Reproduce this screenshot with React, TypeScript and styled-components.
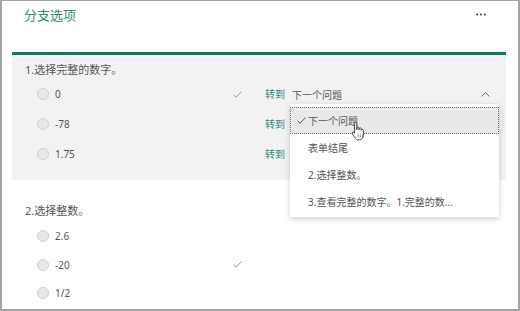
import styled, { createGlobalStyle } from "styled-components";

const GlobalStyle = createGlobalStyle`
  html, body { margin: 0; padding: 0; background: #fff; }
  body {
    font-family: "Noto Sans", "Noto Sans CJK SC", sans-serif;
    color: #555;
  }
`;

const Frame = styled.div`
  box-sizing: border-box;
  width: 520px;
  height: 311px;
  border: 2px solid #a3a3a3;
  border-top-width: 1px;
  padding: 0 12px 0 10px;
  overflow: hidden;
  display: flex;
  flex-direction: column;
`;

const Header = styled.div`
  height: 51px;
  flex: none;
  display: flex;
  justify-content: space-between;
  align-items: flex-start;
  padding: 5px 20px 0 12px;
  box-sizing: border-box;
`;

const Title = styled.div`
  font-size: 13px;
  line-height: 18px;
  color: #2f8a78;
`;

const More = styled.div`
  padding-top: 7px;
  display: flex;
`;

const TealBar = styled.div`
  height: 3px;
  flex: none;
  background: #0d7a69;
`;

const Section = styled.div<{ $shaded?: boolean; $top: number; $bottom: number }>`
  flex: none;
  background: ${({ $shaded }) => ($shaded ? "#f2f2f2" : "#fff")};
  padding: ${({ $top, $bottom }) => `${$top}px 0 ${$bottom}px`};
`;

const Question = styled.div<{ $gap: number }>`
  padding-left: 13px;
  font-size: 11px;
  line-height: 16px;
  color: #555;
  margin-bottom: ${({ $gap }) => $gap}px;
`;

const Row = styled.div<{ $h: number }>`
  height: ${({ $h }) => $h}px;
  display: flex;
  align-items: center;
  padding-left: 25px;
`;

const Radio = styled.span`
  box-sizing: border-box;
  width: 12px;
  height: 12px;
  border-radius: 50%;
  border: 1px solid #d0d0d0;
  background: #e8e8e8;
  margin-right: 6px;
  flex: none;
`;

const Label = styled.span`
  width: 174px;
  font-size: 10px;
  line-height: 14px;
  color: #555;
`;

const CheckCell = styled.span`
  width: 16px;
  display: flex;
  justify-content: center;
`;

const Goto = styled.span`
  margin-left: 20px;
  width: 20px;
  font-size: 10px;
  line-height: 14px;
  color: #2a8a78;
  margin-right: 7px;
`;

const Select = styled.div`
  position: relative;
  align-self: stretch;
  flex: 1;
  display: flex;
  align-items: center;
  justify-content: space-between;
  padding-right: 16px;
  font-size: 10px;
  color: #555;
`;

const Menu = styled.div`
  position: absolute;
  top: 25px;
  left: -2px;
  width: 209px;
  background: #fff;
  box-shadow: 0 2px 6px rgba(0, 0, 0, 0.2);
  padding: 3px 0 2px;
  z-index: 2;
`;

const MenuItem = styled.div<{ $active?: boolean }>`
  box-sizing: border-box;
  height: 27px;
  display: flex;
  align-items: center;
  padding-left: ${({ $active }) => ($active ? "6px" : "17px")};
  font-size: 10px;
  color: #555;
  white-space: nowrap;
  background: ${({ $active }) => ($active ? "#e9e9e9" : "transparent")};
  border: 1px dotted ${({ $active }) => ($active ? "#6a6a6a" : "transparent")};
`;

const MenuCheck = styled.span`
  width: 11px;
  display: flex;
  align-items: center;
`;

const Cursor = styled.div`
  position: absolute;
  left: 61px;
  top: 17px;
`;

const Check = ({ color = "#5fae9f" }: { color?: string }) => (
  <svg width="9" height="7" viewBox="0 0 9 7">
    <polyline points="0.5,3.8 3,6.2 8.5,0.6" fill="none" stroke={color} strokeWidth="1" />
  </svg>
);

const ChevronUp = () => (
  <svg width="9" height="5" viewBox="0 0 9 5">
    <polyline points="0.5,4.5 4.5,0.7 8.5,4.5" fill="none" stroke="#666" strokeWidth="1" />
  </svg>
);

const Dots = () => (
  <svg width="10" height="3" viewBox="0 0 10 3">
    <circle cx="1.2" cy="1.5" r="1" fill="#333" />
    <circle cx="5" cy="1.5" r="1" fill="#333" />
    <circle cx="8.8" cy="1.5" r="1" fill="#333" />
  </svg>
);

const Hand = () => (
  <svg width="16" height="20" viewBox="0 0 14 18">
    <path
      d="M4 1.2c.6 0 1 .4 1 1V8l.1-1.6c.1-.6.5-.9 1-.9s.9.4.9 1V8l.1-1c.1-.6.5-.9 1-.9s.9.4.9 1v1.3c.1-.5.5-.8 1-.8s.9.4.9 1V13c0 2.3-1.6 4-3.8 4H6.3c-1.1 0-2-.5-2.6-1.4L1 11.6c-.3-.5-.2-1.1.3-1.4.5-.3 1.1-.2 1.4.2L3 11V2.2c0-.6.4-1 1-1z"
      fill="#fff"
      stroke="#333"
      strokeWidth="0.8"
      strokeLinejoin="round"
    />
    <path d="M6.2 12v3M8.2 12v3M10.2 12v3" stroke="#444" strokeWidth="0.5" />
  </svg>
);

type Option = { label: string; correct?: boolean };

const q1: Option[] = [{ label: "0", correct: true }, { label: "-78" }, { label: "1.75" }];
const q2: Option[] = [{ label: "2.6" }, { label: "-20", correct: true }, { label: "1/2" }];

const menuItems = ["表单结尾", "2.选择整数。", "3.查看完整的数字。1.完整的数..."];

export default function App() {
  return (
    <>
      <GlobalStyle />
      <Frame>
        <Header>
          <Title>分支选项</Title>
          <More>
            <Dots />
          </More>
        </Header>
        <TealBar />
        <Section $shaded $top={7} $bottom={11}>
          <Question $gap={1}>1.选择完整的数字。</Question>
          {q1.map((o, i) => (
            <Row key={o.label} $h={30}>
              <Radio />
              <Label>{o.label}</Label>
              <CheckCell>{o.correct && <Check />}</CheckCell>
              <Goto>转到</Goto>
              <Select>
                {i === 0 && (
                  <>
                    <span>下一个问题</span>
                    <ChevronUp />
                    <Menu>
                      <MenuItem $active>
                        <MenuCheck>
                          <Check color="#555" />
                        </MenuCheck>
                        下一个问题
                      </MenuItem>
                      {menuItems.map((m) => (
                        <MenuItem key={m}>{m}</MenuItem>
                      ))}
                      <Cursor>
                        <Hand />
                      </Cursor>
                    </Menu>
                  </>
                )}
              </Select>
            </Row>
          ))}
        </Section>
        <Section $top={23} $bottom={0}>
          <Question $gap={3}>2.选择整数。</Question>
          {q2.map((o) => (
            <Row key={o.label} $h={28.5}>
              <Radio />
              <Label>{o.label}</Label>
              <CheckCell>{o.correct && <Check />}</CheckCell>
            </Row>
          ))}
        </Section>
      </Frame>
    </>
  );
}
